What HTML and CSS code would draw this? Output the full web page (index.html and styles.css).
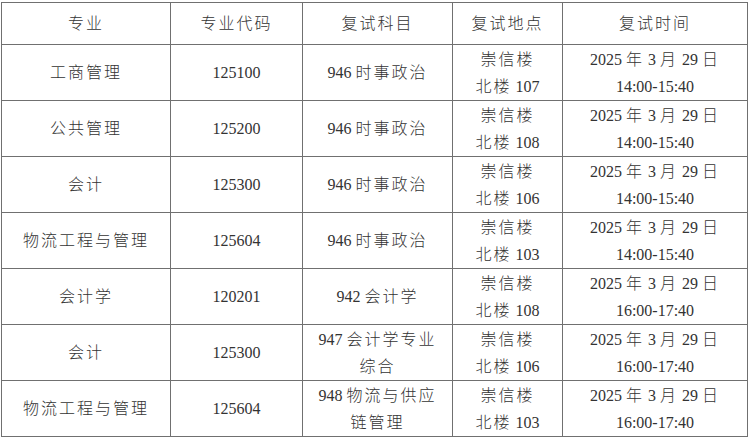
FILE: index.html
```html
<!DOCTYPE html>
<html lang="zh-CN">
<head>
<meta charset="utf-8">
<link rel="stylesheet" href="styles.css">
</head>
<body>
<table class="sched">
  <colgroup>
    <col class="c1"><col class="c2"><col class="c3"><col class="c4"><col class="c5">
  </colgroup>
  <tr class="head">
    <td><span class="z">专业</span></td>
    <td><span class="z">专业代码</span></td>
    <td><span class="z">复试科目</span></td>
    <td><span class="z">复试地点</span></td>
    <td><span class="z">复试时间</span></td>
  </tr>
  <tr>
    <td><span class="z">工商管理</span></td>
    <td>125100</td>
    <td>946 <span class="z">时事政治</span></td>
    <td><span class="z">崇信楼</span><br><span class="z">北楼</span> 107</td>
    <td>2025 <span class="z">年</span> 3 <span class="z">月</span> 29 <span class="z">日</span><br>14:00-15:40</td>
  </tr>
  <tr>
    <td><span class="z">公共管理</span></td>
    <td>125200</td>
    <td>946 <span class="z">时事政治</span></td>
    <td><span class="z">崇信楼</span><br><span class="z">北楼</span> 108</td>
    <td>2025 <span class="z">年</span> 3 <span class="z">月</span> 29 <span class="z">日</span><br>14:00-15:40</td>
  </tr>
  <tr>
    <td><span class="z">会计</span></td>
    <td>125300</td>
    <td>946 <span class="z">时事政治</span></td>
    <td><span class="z">崇信楼</span><br><span class="z">北楼</span> 106</td>
    <td>2025 <span class="z">年</span> 3 <span class="z">月</span> 29 <span class="z">日</span><br>14:00-15:40</td>
  </tr>
  <tr>
    <td><span class="z">物流工程与管理</span></td>
    <td>125604</td>
    <td>946 <span class="z">时事政治</span></td>
    <td><span class="z">崇信楼</span><br><span class="z">北楼</span> 103</td>
    <td>2025 <span class="z">年</span> 3 <span class="z">月</span> 29 <span class="z">日</span><br>14:00-15:40</td>
  </tr>
  <tr>
    <td><span class="z">会计学</span></td>
    <td>120201</td>
    <td>942 <span class="z">会计学</span></td>
    <td><span class="z">崇信楼</span><br><span class="z">北楼</span> 108</td>
    <td>2025 <span class="z">年</span> 3 <span class="z">月</span> 29 <span class="z">日</span><br>16:00-17:40</td>
  </tr>
  <tr>
    <td><span class="z">会计</span></td>
    <td>125300</td>
    <td>947 <span class="z">会计学专业</span><br><span class="z">综合</span></td>
    <td><span class="z">崇信楼</span><br><span class="z">北楼</span> 106</td>
    <td>2025 <span class="z">年</span> 3 <span class="z">月</span> 29 <span class="z">日</span><br>16:00-17:40</td>
  </tr>
  <tr>
    <td><span class="z">物流工程与管理</span></td>
    <td>125604</td>
    <td>948 <span class="z">物流与供应</span><br><span class="z">链管理</span></td>
    <td><span class="z">崇信楼</span><br><span class="z">北楼</span> 103</td>
    <td>2025 <span class="z">年</span> 3 <span class="z">月</span> 29 <span class="z">日</span><br>16:00-17:40</td>
  </tr>
</table>
</body>
</html>
```

FILE: styles.css
```css
html, body {
  margin: 0;
  padding: 0;
  background: #ffffff;
}
body {
  padding: 2px 0 0 1px;
  font-family: "Liberation Serif", "Noto Sans CJK SC", serif;
  font-size: 16px;
  color: #333333;
}
.sched {
  border-collapse: collapse;
  table-layout: fixed;
  width: 746px;
}
.c1 { width: 169px; }
.c2 { width: 132px; }
.c3 { width: 150px; }
.c4 { width: 110px; }
.c5 { width: 185px; }
.sched td {
  border: 1px solid #707070;
  text-align: center;
  vertical-align: middle;
  padding: 0;
  line-height: 27px;
  white-space: nowrap;
}
.sched tr { height: 56px; }
.sched tr.head { height: 42px; }
.z {
  letter-spacing: 2px;
  font-weight: 300;
}
```
